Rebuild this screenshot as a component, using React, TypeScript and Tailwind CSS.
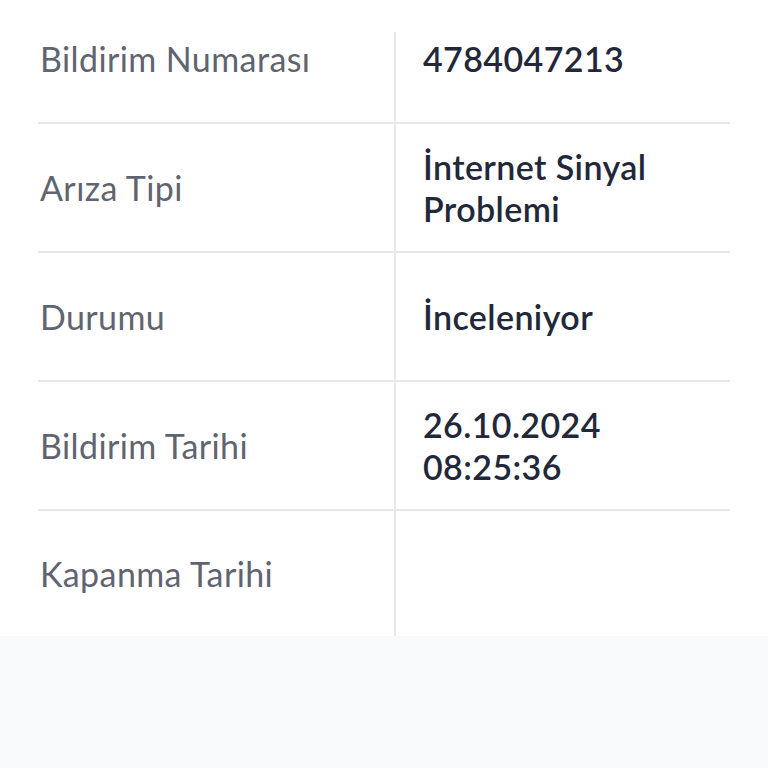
import React from 'react'

const rows = [
  { label: 'Arıza Tipi', value: ['İnternet Sinyal', 'Problemi'] },
  { label: 'Durumu', value: ['İnceleniyor'] },
  { label: 'Bildirim Tarihi', value: ['26.10.2024', '08:25:36'] },
]

export default function App() {
  return (
    <div className="w-[768px] h-[768px] bg-[#f8f9fb] font-['Lato',sans-serif] text-[34px] leading-[42px] tracking-[0.4px]">
      <div className="bg-white pl-[38px]">
        <div className="w-[692px]">
          {/* ilk satır: üstü kesik */}
          <div className="grid grid-cols-[356px_336px] h-[124px] border-b-2 border-[#e6e8ec]">
            <div className="pl-[2px] pt-[38px] text-[#5f6470]">Bildirim Numarası</div>
            <div className="mt-[32px] border-l-2 border-[#e6e8ec] pl-[27px] pt-[6px] font-semibold text-[#222839]">
              4784047213
            </div>
          </div>

          {rows.map((row) => (
            <div key={row.label} className="grid grid-cols-[356px_336px] h-[129px] border-b-2 border-[#e6e8ec]">
              <div className="pl-[2px] flex items-center text-[#5f6470]">{row.label}</div>
              <div className="border-l-2 border-[#e6e8ec] pl-[27px] flex flex-col justify-center font-semibold text-[#222839]">
                {row.value.map((v) => (
                  <span key={v}>{v}</span>
                ))}
              </div>
            </div>
          ))}

          <div className="grid grid-cols-[356px_336px] h-[125px]">
            <div className="pl-[2px] flex items-center text-[#5f6470]">Kapanma Tarihi</div>
            <div className="border-l-2 border-[#e6e8ec]"></div>
          </div>
        </div>
      </div>
    </div>
  )
}
